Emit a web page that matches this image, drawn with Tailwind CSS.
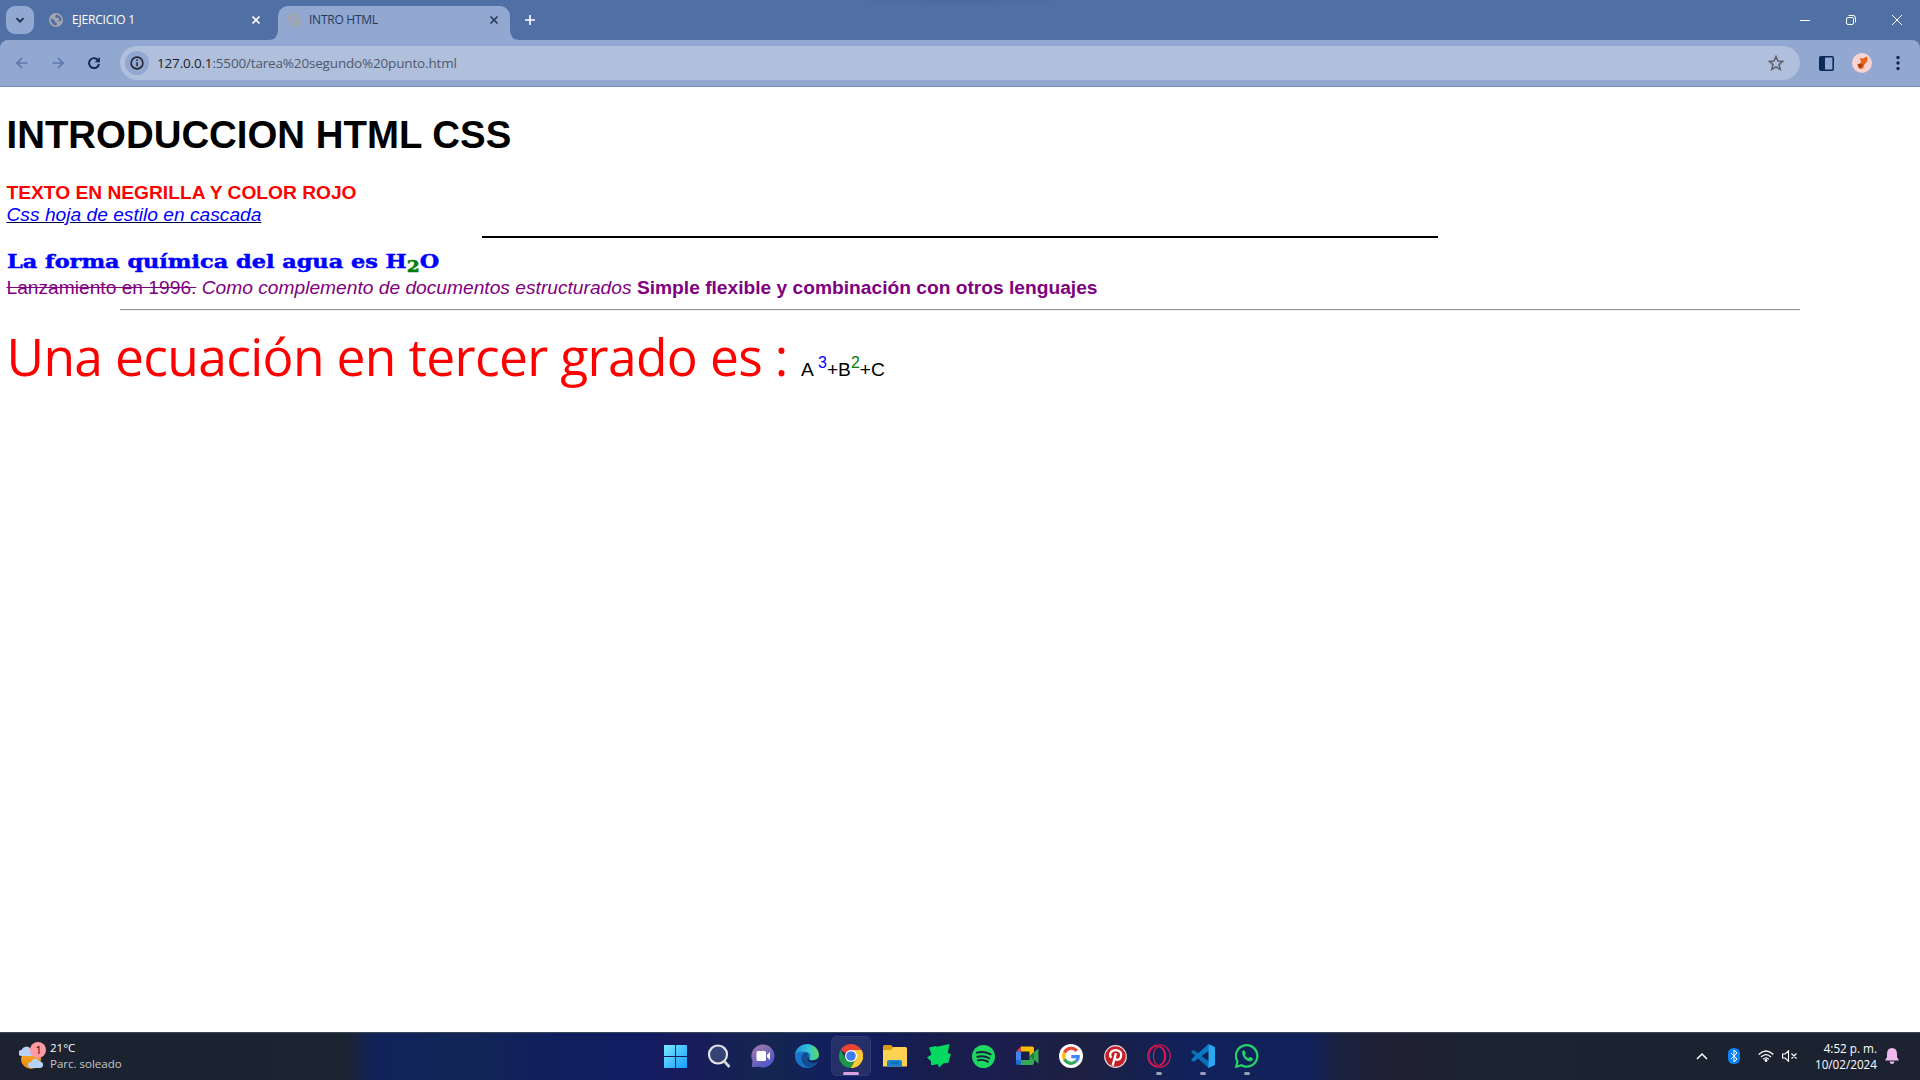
<!DOCTYPE html>
<html lang="es">
<head>
<meta charset="utf-8">
<title>INTRO HTML</title>
<script src="https://cdn.jsdelivr.net/npm/@tailwindcss/browser@4"></script>
</head>
<body class="w-[1920px] h-[1080px] overflow-hidden flex flex-col bg-white font-['Open_Sans',sans-serif]">
<svg class="hidden">
  <defs>
    <symbol id="x" viewBox="0 0 10 10"><path d="M1.500 1.500l7 7M8.500 1.500l-7 7" stroke="currentColor" stroke-width="1.700" fill="none"/></symbol>
  </defs>
</svg>

<!-- Tab strip -->
<header class="h-10 shrink-0 bg-[#506fa5] bg-[radial-gradient(ellipse_120px_6px_at_960px_0px,#4a6999,#506fa5)] flex">
  <div class="w-[34px] h-full pl-1.5 pt-1.5"><div class="w-7 h-7 rounded-[9px] bg-[#92a8d1] grid place-items-center"><svg class="size-[10px]" viewBox="0 0 10 10"><path d="M1.500 3.200L5 6.700l3.500-3.500" fill="none" stroke="#1b2b49" stroke-width="1.700"/></svg></div></div>
  <div class="w-[234px] h-full pl-[15px] pr-[7px] flex items-center text-white">
    <svg class="size-[14px]" viewBox="0 0 14 14"><circle cx="7" cy="7" r="7" fill="#a3a6ac"/><path d="M1.500 5.500l2.500 .6 1.800 1.400 .4 2 1.800.8-.5 2.300-1.500-.3Q2 11 1.500 5.500zM7.500 1.500l-1.300 1.800 .6 1.700 2.500-.2 1 1.700-1.500 1.500 2 .6 1.700-1.600Q12.500 3 7.500 1.500z" fill="#506fa5"/></svg>
    <span class="ml-[9px] text-[12px] font-medium tracking-[-0.2px]">EJERCICIO 1</span>
    <svg class="ml-auto size-[10px]"><use href="#x"/></svg>
  </div>
  <svg class="self-end w-[10px] h-[10px]" viewBox="0 0 10 10"><path d="M10 0v10H0Q10 10 10 0" fill="#92a8d1"/></svg>
  <div class="self-end h-[34px] w-[232px] bg-[#92a8d1] rounded-t-[10px] pl-[9px] pr-[11px] pb-[6px] flex items-center text-[#27395b]">
    <svg class="size-[14px]" viewBox="0 0 14 14"><circle cx="7" cy="7" r="7" fill="#a3a6ac"/><path d="M1.500 5.500l2.500 .6 1.800 1.400 .4 2 1.800.8-.5 2.300-1.500-.3Q2 11 1.500 5.500zM7.500 1.500l-1.300 1.800 .6 1.700 2.500-.2 1 1.700-1.500 1.500 2 .6 1.700-1.600Q12.500 3 7.500 1.500z" fill="#92a8d1"/></svg>
    <span class="ml-2 text-[12px] tracking-[-0.25px]">INTRO HTML</span>
    <svg class="ml-auto size-[10px]"><use href="#x"/></svg>
  </div>
  <svg class="self-end w-[10px] h-[10px]" viewBox="0 0 10 10"><path d="M0 0v10H10Q0 10 0 0" fill="#92a8d1"/></svg>
  <svg class="mt-[15px] ml-[5px] size-[10px]" viewBox="0 0 10 10"><path d="M5 0v10M0 5h10" stroke="#fff" stroke-width="1.600"/></svg>
  <div class="ml-auto pt-[15px] pr-[18px] flex gap-9 text-white">
    <svg class="size-[10px]" viewBox="0 0 10 10"><path d="M0 5.500h10" stroke="#fff"/></svg>
    <svg class="size-[10px]" viewBox="0 0 10 10"><g fill="none" stroke="#fff"><rect x=".5" y="2.500" width="7" height="7" rx="1.500"/><path d="M2.500 .5h4.500q2.500 0 2.500 2.500v4.500"/></g></svg>
    <svg class="size-[10px]" viewBox="0 0 10 10"><path d="M0 0l10 10M10 0L0 10" stroke="#fff"/></svg>
  </div>
</header>

<!-- Toolbar -->
<div class="h-[47px] shrink-0 bg-[#506fa5]">
<div class="h-full rounded-t-[8px] bg-[#92a8d1] border-b border-[#748cbd] flex items-center pl-4 pr-[19px]">
  <svg class="size-3" viewBox="0 0 12 12"><path d="M11.500 6H1.500M6 1L1 6l5 5" fill="none" stroke="#5c77aa" stroke-width="1.600"/></svg>
  <svg class="ml-6 size-3" viewBox="0 0 12 12"><path d="M.5 6h10M6 1l5 5-5 5" fill="none" stroke="#5c77aa" stroke-width="1.600"/></svg>
  <svg class="ml-6 size-3" viewBox="0 0 12 12"><path d="M10.300 3.500A5 5 0 1 0 11 7" fill="none" stroke="#0b2859" stroke-width="1.900"/><path d="M11.900 0v5.200H6.800z" fill="#0b2859"/></svg>
  <div class="ml-5 w-[1680px] h-[34px] rounded-full bg-[#afbfdc] flex items-center pl-[5px] pr-4">
    <div class="size-6 rounded-full bg-[#92a8d1] grid place-items-center"><svg class="size-[14px]" viewBox="0 0 14 14"><circle cx="7" cy="7" r="5.900" fill="none" stroke="#22262f" stroke-width="1.600"/><path d="M7 6.200v4M7 3.600v1.500" stroke="#22262f" stroke-width="1.500"/></svg></div>
    <span class="ml-2 text-[13.500px] text-[#4e5a6c] tracking-[-0.17px]"><span class="text-[#20242d]">127.0.0.1</span>:5500/tarea%20segundo%20punto.html</span>
    <svg class="ml-auto size-4" viewBox="0 0 16 16"><path d="M8 1.500l1.900 4.500 4.800.4-3.700 3.200 1.200 4.800L8 11.800l-4.200 2.600L5 9.600 1.300 6.400l4.800-.4z" fill="none" stroke="#5b6067" stroke-width="1.500"/></svg>
  </div>
  <svg class="ml-[19px] w-[15px] h-[15px]" viewBox="0 0 15 15"><rect x=".8" y=".8" width="13.400" height="13.400" rx="1" fill="none" stroke="#0b2859" stroke-width="1.600"/><path d="M1 1h5v13H1z" fill="#0b2859"/></svg>
  <svg class="ml-[18px] size-5" viewBox="0 0 20 20"><circle cx="10" cy="10" r="10" fill="#f8d3d2"/><path d="M8 5l3 .5L15 3.500l.5 4.500-3.500 4-1 4-4-.5-1.500-4 3.500-2z" fill="#e8601c"/><path d="M5.500 11h5l.5 4.500-4-.5z" fill="#b23c10"/><path d="M9 13.500l2.500 1.500-1 1.500z" fill="#f1b43a"/></svg>
  <svg class="ml-auto w-[6px] h-4" viewBox="0 0 6 16"><g fill="#0b2859"><circle cx="3" cy="2.500" r="1.700"/><circle cx="3" cy="8" r="1.700"/><circle cx="3" cy="13.500" r="1.700"/></g></svg>
</div>
</div>

<!-- Document -->
<main class="flex-1 pl-[6.500px] font-['Liberation_Sans',Arial,sans-serif] text-black whitespace-nowrap">
  <h1 class="pt-[24px] h-[93px] text-[38.400px] leading-[48px] font-bold">INTRODUCCION HTML CSS</h1>
  <p class="h-[23px] text-[19.200px] leading-[26px] font-bold text-[#f00]">TEXTO EN NEGRILLA Y COLOR ROJO</p>
  <p class="h-[33px] text-[19.200px] leading-[23px] italic text-[#00f]"><u class="decoration-[#00003c]">Css hoja de estilo en cascada</u></p>
  <hr class="ml-[475.500px] w-[956px] border-0 h-[2px] bg-black">
  <p class="h-[36px] pt-[11px] text-[19.200px] leading-[26px] font-bold text-[#00f] font-['DejaVu_Serif',serif] origin-left w-fit scale-x-[1.167] [-webkit-text-stroke:0.5px]">La forma química del agua es H<sub class="text-[16px] text-[#008000]">2</sub>O</p>
  <p class="h-[35px] pt-[1px] text-[19.200px] leading-[26px] text-[#800080]"><s>Lanzamiento en 1996.</s> <i>Como complemento de documentos estructurados</i> <b>Simple flexible y combinación con otros lenguajes</b></p>
  <hr class="ml-[113.500px] w-[1680px] h-[2px] border-0 border-t border-[#969696] bg-[#ededed]">
  <p class="pt-[10px] text-[19.200px] leading-[70px]"><span class="font-['Open_Sans'] text-[51.500px] tracking-[-0.65px] text-[#f00] mr-[9px]">Una ecuación en tercer grado es :</span> A <sup class="text-[16px] text-[#00f]">3</sup>+B<sup class="text-[16px] text-[#008000]">2</sup>+C</p>
</main>

<!-- Taskbar -->
<footer class="h-12 shrink-0 border-t border-[#3b4658] bg-[linear-gradient(90deg,#1c222f_0px,#1b2431_345px,#11235a_375px,#122656_470px,#101e5e_560px,#101d62_640px,#181b5c_680px,#14264f_770px,#101d62_850px,#191e49_950px,#1a1d52_975px,#1d2040_1080px,#11215a_1180px,#11215a_1310px,#1a2242_1335px,#201f33_1390px,#1b2431_1480px,#1c222f_1920px)] flex items-center text-white">
  <div class="w-[653px] pl-[19px] flex items-center pb-[2px]">
    <svg class="w-[27px] h-[28px]" viewBox="0 0 27 28"><defs><linearGradient id="sun" x2="0" y2="1"><stop stop-color="#f8b52a"/><stop offset="1" stop-color="#f0820f"/></linearGradient></defs><circle cx="12" cy="17" r="10" fill="url(#sun)"/><path d="M2.500 14a3 3 0 0 1 0-6 5 5 0 0 1 9-1q3 2 2 7z" fill="#b9d0f7"/><path d="M12 26a3 3 0 0 1 0-6 4.500 4.500 0 0 1 8.500-.5 3.300 3.300 0 0 1 1 6.500z" fill="#b5d2fa"/><circle cx="19" cy="8" r="8" fill="#ff99a4"/><text x="19.500" y="12" text-anchor="middle" font-size="11.500" fill="#111" font-family="Open Sans">1</text></svg>
    <div class="ml-[4px] text-[11.500px] leading-4"><div>21°C</div><div class="text-[#c5c8cd]">Parc. soleado</div></div>
  </div>
  <nav class="flex h-full items-center pb-[1px]">
    <div class="w-11 h-full grid place-items-center"><svg class="w-[23px] h-[23px]" viewBox="0 0 23.500 23.500"><defs><linearGradient id="win" x2="1" y2="1"><stop stop-color="#7be9ff"/><stop offset="1" stop-color="#159dff"/></linearGradient></defs><path d="M0 0h11.300v11.300H0zM12.300 0H23.500v11.300H12.300zM0 12.300h11.300v11.300H0zM12.300 12.300H23.500v11.300H12.300z" fill="url(#win)"/></svg></div>
    <div class="w-11 h-full grid place-items-center"><svg class="size-6" viewBox="0 0 24 24"><circle cx="11" cy="10.500" r="9" fill="#354274" stroke="#e2e3e5" stroke-width="2.200"/><path d="M17 17l5.500 6" stroke="#d5d6d9" stroke-width="2.600"/></svg></div>
    <div class="w-11 h-full grid place-items-center"><svg class="size-6" viewBox="0 0 24 24"><defs><linearGradient id="chat" x2=".6" y2="1"><stop stop-color="#a87ca6"/><stop offset="1" stop-color="#5157c7"/></linearGradient></defs><path d="M12 .5a11.500 11.500 0 1 1-4 22.300L.8 23l.7-6A11.500 11.500 0 0 1 12 .5z" fill="url(#chat)"/><rect x="5.500" y="7" width="9.500" height="10" rx="1.500" fill="#fff"/><path d="M16 11l3-3v8l-3-3z" fill="#fff"/></svg></div>
    <div class="w-11 h-full grid place-items-center"><svg class="size-6" viewBox="0 0 24 24"><defs><linearGradient id="e1" x2="1"><stop stop-color="#2190d9"/><stop offset=".55" stop-color="#33c2db"/><stop offset="1" stop-color="#5fdc58"/></linearGradient></defs><circle cx="12" cy="12" r="12" fill="#1774c9"/><path d="M0 11C1-1 18-4 23 7c3 7-3 10-7 9-2-.5-2-2-1-3 1-2-1-5-4-5C6 7 1 8 0 11z" fill="url(#e1)"/><path d="M10 8.500c-6 3-4 12 2.500 14.500 5 0 8-2 10-5-4 2-10 1-10-5 0-2 .7-3 1.200-3.200Q12 8 10 8.500z" fill="#124c91"/><path d="M14 13c-1 2 .5 3.500 3 3.500 3 0 6-1.500 6.500-3 .5 2-.5 3.500-1.500 4.500-4 2-10 1-9.500-5z" fill="#142453"/></svg></div>
    <div class="w-11 h-full grid place-items-center"><div class="w-10 h-10 rounded-[5px] bg-[#252f68] border border-[#303a70] flex flex-col items-center pt-[7px]"><svg class="size-6 shrink-0" viewBox="0 0 24 24"><path d="M12 12L1.600 6A12 12 0 0 1 22.400 6z" fill="#ea4335"/><path d="M12 12V6h10.400A12 12 0 0 1 12 24z" fill="#fcc934"/><path d="M12 24A12 12 0 0 1 1.600 6L6.800 15 12 18l5.200-3z" fill="#1e9648"/><path d="M17.200 15L12 24A12 12 0 0 0 22.400 6H12z" fill="#fcc934"/><circle cx="12" cy="12" r="6" fill="#fff"/><circle cx="12" cy="12" r="4.800" fill="#3e7de9"/></svg><div class="mt-1 w-4 h-[3px] shrink-0 rounded-full bg-[#dc9fe0]"></div></div></div>
    <div class="w-11 h-full grid place-items-center"><svg class="size-6" viewBox="0 0 24 24"><path d="M0 2.500Q0 1 1.500 1H8l3 3-2 4H0z" fill="#d99b11"/><path d="M0 6h8l2.500-3H22.500Q24 3 24 4.500V22.500H0z" fill="#ffd251"/><path d="M4 22.500V18q0-2 2-2h11q2 0 2 2v4.500z" fill="#1682cf"/><path d="M7.500 19h8" stroke="#0b5b9f"/></svg></div>
    <div class="w-11 h-full grid place-items-center"><svg class="size-6" viewBox="0 0 24 24"><path d="M2 3.500L9 2l1 .7L22.500 0l-1.700 9 3 1-2.500 9-4.800.3-4.500 4.500-1-3.500-7 1L4 17l-4-3.500 4.500-3z" fill="#05d962"/></svg></div>
    <div class="w-11 h-full grid place-items-center"><svg class="size-[23px]" viewBox="0 0 24 24"><circle cx="12" cy="12" r="12" fill="#1ed760"/><path d="M5 8q7.500-2 14.500 1.700M5.500 12.300q6.500-1.800 12.500 1.500M6 16q5.500-1.500 10.500 1.400" stroke="#172040" stroke-width="2" fill="none" stroke-linecap="round"/></svg></div>
    <div class="w-11 h-full grid place-items-center"><svg class="size-6" viewBox="0 0 24 24"><path d="M1 7.500L6 2.500v5z" fill="#ea4335"/><path d="M6 2.500h11q2 0 2 2V12l-4.500 0V7.500H6z" fill="#fbbc04"/><path d="M1 7.500h5V16H1z" fill="#4285f4"/><path d="M1 16h5v5H3q-2 0-2-2z" fill="#2269da"/><path d="M6 16h8.500v-4L23.500 4.500v15L19 16v3q0 2-2 2H6z" fill="#34a853"/><path d="M14.500 12L19 8v8z" fill="#188038"/></svg></div>
    <div class="w-11 h-full grid place-items-center"><svg class="size-6" viewBox="0 0 24 24"><circle cx="12" cy="12" r="12" fill="#fff"/><g fill="none" stroke-width="3.200"><path d="M17.800 6.900A7.300 7.300 0 0 0 5.500 8.700" stroke="#ea4335"/><path d="M5.500 8.700a7.300 7.300 0 0 0 0 6.600" stroke="#fbbc05"/><path d="M5.500 15.300a7.300 7.300 0 0 0 11.200 2.300" stroke="#34a853"/><path d="M16.700 17.600q2.600-2.100 2.600-5H12.300" stroke="#4285f4"/></g></svg></div>
    <div class="w-11 h-full grid place-items-center"><svg class="size-[23px]" viewBox="0 0 24 24"><circle cx="12" cy="12" r="11.300" fill="#c31f27" stroke="#e5d5da" stroke-width="1.200"/><path d="M7.500 13.500C4.500 9 8 5.300 12.300 5.300c4.700 0 6.500 3.600 5.400 7-1.200 3.800-5 3.800-6 1.800M12.500 8.500L9 21.500" fill="none" stroke="#fff" stroke-width="2.400"/></svg></div>
    <div class="w-11 h-full flex flex-col items-center pt-[11px]"><svg class="size-6 shrink-0" viewBox="0 0 24 24"><g fill="none" stroke="#e0184f" stroke-width="1.100"><circle cx="12" cy="12" r="11.300"/><ellipse cx="10" cy="12" rx="8" ry="10"/><ellipse cx="12" cy="12" rx="5.600" ry="9.500"/><path d="M12 2.500c9 1 9 18 0 19"/></g></svg><div class="mt-1 w-[6px] h-[3px] shrink-0 rounded-full bg-[#9a9fba]"></div></div>
    <div class="w-11 h-full flex flex-col items-center pt-[11px]"><svg class="size-6 shrink-0" viewBox="0 0 24 24"><path d="M0 8.500L2.500 6 18 18v6L1 17 0 15.500 17 0v7z" fill="none"/><path d="M0 8L2.500 6 18 17.500V24h-.5z" fill="#0a70b5"/><path d="M17.500 0L0 15.500 2.500 18 18 6.500z" fill="#087ac1"/><path d="M17.500 0L24 3v18l-6.500 3z" fill="#2ba6f0"/></svg><div class="mt-1 w-[6px] h-[3px] shrink-0 rounded-full bg-[#9a9fba]"></div></div>
    <div class="w-11 h-full flex flex-col items-center pt-[11px]"><svg class="size-6 shrink-0" viewBox="0 0 24 24"><path d="M2.500 17.500A10.700 10.700 0 1 1 6.500 21.300L1.200 22.800z" fill="none" stroke="#23d366" stroke-width="2.200"/><path d="M7 7.500l2-1.500 2 3.500-1.200 1.500q1.300 2.300 3.500 3.200l1.500-1.400 3.300 1.700q-.6 3-3.500 3Q7.500 16 7 7.500z" fill="#23d366"/></svg><div class="mt-1 w-[6px] h-[3px] shrink-0 rounded-full bg-[#9a9fba]"></div></div>
  </nav>
  <div class="ml-auto pr-[21px] pb-[1px] flex items-center">
    <svg class="w-3 h-2" viewBox="0 0 12 8"><path d="M1 7l5-5 5 5" fill="none" stroke="#fff" stroke-width="1.500"/></svg>
    <svg class="ml-5 w-3 h-4" viewBox="0 0 12 16"><rect width="12" height="16" rx="5.500" fill="#0a84f8"/><path d="M3 5l6 6-3 3V2l3 3-6 6" fill="none" stroke="#fff"/></svg>
    <svg class="ml-[18px] w-4 h-3" viewBox="0 0 16 12"><g fill="none" stroke="#fff" stroke-width="1.300"><path d="M.7 4.500q7.300-7 14.600 0M3 7q5-4.800 10 0M5.200 9.200q2.800-2.600 5.600 0"/></g><circle cx="8" cy="10.500" r="1.400" fill="#fff"/></svg>
    <svg class="ml-2 w-4 h-3" viewBox="0 0 16 12"><path d="M.6 4h2.500L6.500 .8v10.400L3.100 8H.6zM9.500 3.500l5 5M14.500 3.500l-5 5" fill="none" stroke="#fff" stroke-width="1.100"/></svg>
    <div class="ml-[17px] -mt-[1px] text-right text-[11.700px] leading-4"><div>4:52 p. m.</div><div>10/02/2024</div></div>
    <svg class="ml-2 w-[14px] h-4" viewBox="0 0 14 16"><path d="M7 0q5 0 5 6v3l2 3.500H0L2 9V6q0-6 5-6zM4.500 13.500h5Q9 16 7 16T4.500 13.500z" fill="#efb9ee"/></svg>
  </div>
</footer>
</body>
</html>
